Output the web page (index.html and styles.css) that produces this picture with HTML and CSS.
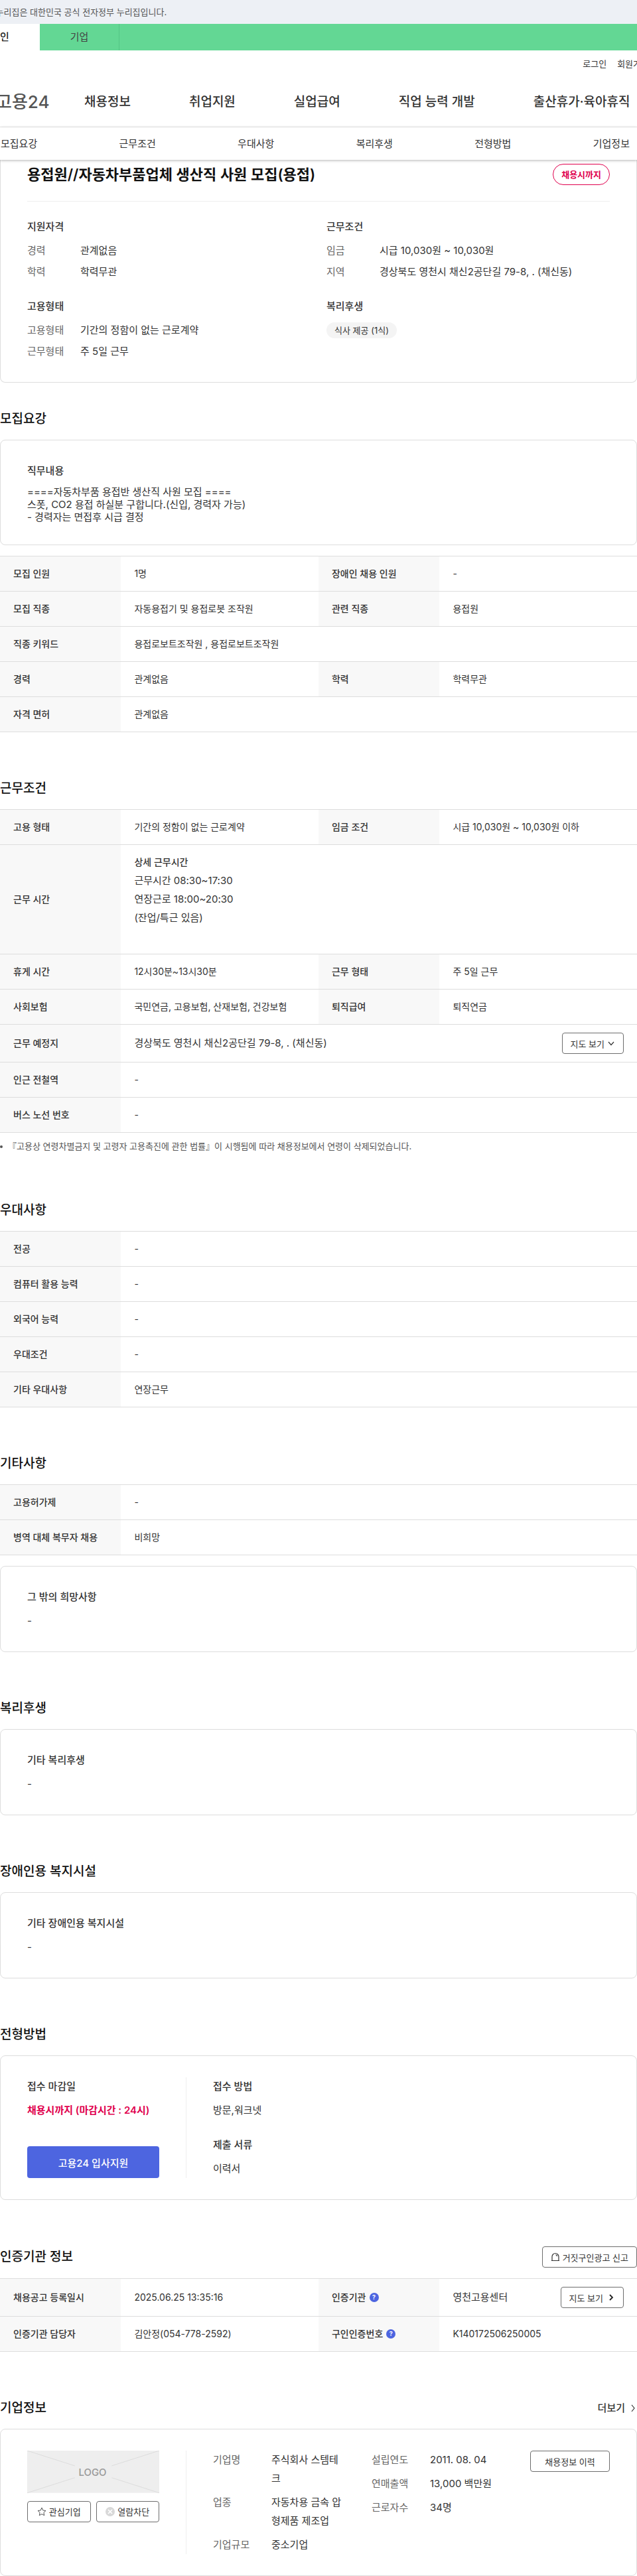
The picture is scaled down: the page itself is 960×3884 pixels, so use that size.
FILE: index.html
```html
<!DOCTYPE html>
<html lang="ko">
<head>
    <meta charset="UTF-8">
    <meta name="viewport" content="width=device-width, initial-scale=1.0">
    <title>채용정보 상세 - 고용24</title>
    <link rel="stylesheet" href="styles.css">
</head>
<body>
    <!-- 헤더 -->
    <header class="header">
        <div class="gov-bar">
            <p>이 누리집은 대한민국 공식 전자정부 누리집입니다.</p>
        </div>
        <nav class="site-tabs">
            <a href="#" class="active">개인</a>
            <a href="#">기업</a>
        </nav>
        <div class="util">
            <a href="#">로그인</a>
            <a href="#">회원가입</a>
        </div>
        <div class="gnb">
            <a href="#" class="logo">고용24</a>
            <nav class="gnb-menu">
                <a href="#">채용정보</a>
                <a href="#">취업지원</a>
                <a href="#">실업급여</a>
                <a href="#">직업 능력 개발</a>
                <a href="#">출산휴가·육아휴직</a>
            </nav>
        </div>
        <nav class="anchor-nav">
            <a href="#recruit">모집요강</a>
            <a href="#work">근무조건</a>
            <a href="#prefer">우대사항</a>
            <a href="#welfare">복리후생</a>
            <a href="#process">전형방법</a>
            <a href="#company">기업정보</a>
        </nav>
    </header>

    <main>
        <!-- 요약 -->
        <section class="box summary">
            <div class="summary-title">
                <h1>용접원//자동차부품업체 생산직 사원 모집(용접)</h1>
                <span class="badge">채용시까지</span>
            </div>
            <div class="summary-grid">
                <div>
                    <h3>지원자격</h3>
                    <dl class="info">
                        <dt>경력</dt><dd>관계없음</dd>
                        <dt>학력</dt><dd>학력무관</dd>
                    </dl>
                </div>
                <div>
                    <h3>근무조건</h3>
                    <dl class="info">
                        <dt>임금</dt><dd>시급 10,030원 ~ 10,030원</dd>
                        <dt>지역</dt><dd>경상북도 영천시 채신2공단길 79-8, . (채신동)</dd>
                    </dl>
                </div>
                <div>
                    <h3>고용형태</h3>
                    <dl class="info">
                        <dt>고용형태</dt><dd>기간의 정함이 없는 근로계약</dd>
                        <dt>근무형태</dt><dd>주 5일 근무</dd>
                    </dl>
                </div>
                <div>
                    <h3>복리후생</h3>
                    <span class="chip">식사 제공 (1식)</span>
                </div>
            </div>
        </section>

        <!-- 모집요강 -->
        <section class="section first" id="recruit">
            <div class="section-head"><h2>모집요강</h2></div>
            <div class="box">
                <h3>직무내용</h3>
                <p class="job-text">====자동차부품 용접반 생산직 사원 모집 ====<br>스폿, CO2 용접 하실분 구합니다.(신입, 경력자 가능)<br>- 경력자는 면접후 시급 결정</p>
            </div>
            <table class="table">
                <colgroup><col class="col-th"><col class="col-td"><col class="col-th"><col class="col-td"></colgroup>
                <tr><th scope="row">모집 인원</th><td>1명</td><th scope="row">장애인 채용 인원</th><td>-</td></tr>
                <tr><th scope="row">모집 직종</th><td>자동용접기 및 용접로봇 조작원</td><th scope="row">관련 직종</th><td>용접원</td></tr>
                <tr><th scope="row">직종 키워드</th><td colspan="3">용접로보트조작원 , 용접로보트조작원</td></tr>
                <tr><th scope="row">경력</th><td>관계없음</td><th scope="row">학력</th><td>학력무관</td></tr>
                <tr><th scope="row">자격 면허</th><td colspan="3">관계없음</td></tr>
            </table>
        </section>

        <!-- 근무조건 -->
        <section class="section" id="work">
            <div class="section-head"><h2>근무조건</h2></div>
            <table class="table">
                <colgroup><col class="col-th"><col class="col-td"><col class="col-th"><col class="col-td"></colgroup>
                <tr><th scope="row">고용 형태</th><td>기간의 정함이 없는 근로계약</td><th scope="row">임금 조건</th><td>시급 10,030원 ~ 10,030원 이하</td></tr>
                <tr>
                    <th scope="row">근무 시간</th>
                    <td colspan="3">
                        <strong>상세 근무시간</strong>
                        <p class="work-time">근무시간 08:30~17:30<br>연장근로 18:00~20:30<br>(잔업/특근 있음)</p>
                    </td>
                </tr>
                <tr><th scope="row">휴게 시간</th><td>12시30분~13시30분</td><th scope="row">근무 형태</th><td>주 5일 근무</td></tr>
                <tr><th scope="row">사회보험</th><td>국민연금, 고용보험, 산재보험, 건강보험</td><th scope="row">퇴직급여</th><td>퇴직연금</td></tr>
                <tr>
                    <th scope="row">근무 예정지</th>
                    <td colspan="3">
                        <div class="cell-between">
                            <span>경상북도 영천시 채신2공단길 79-8, . (채신동)</span>
                            <button type="button" class="btn">지도 보기
                                <svg width="12" height="12" viewBox="0 0 12 12"><path d="M2 4l4 4.500 4-4.500" fill="none" stroke="#333" stroke-width="1.200"/></svg>
                            </button>
                        </div>
                    </td>
                </tr>
                <tr><th scope="row">인근 전철역</th><td colspan="3">-</td></tr>
                <tr><th scope="row">버스 노선 번호</th><td colspan="3">-</td></tr>
            </table>
            <p class="note">『고용상 연령차별금지 및 고령자 고용촉진에 관한 법률』이 시행됨에 따라 채용정보에서 연령이 삭제되었습니다.</p>
        </section>

        <!-- 우대사항 -->
        <section class="section" id="prefer">
            <div class="section-head"><h2>우대사항</h2></div>
            <table class="table">
                <colgroup><col class="col-th"><col></colgroup>
                <tr><th scope="row">전공</th><td>-</td></tr>
                <tr><th scope="row">컴퓨터 활용 능력</th><td>-</td></tr>
                <tr><th scope="row">외국어 능력</th><td>-</td></tr>
                <tr><th scope="row">우대조건</th><td>-</td></tr>
                <tr><th scope="row">기타 우대사항</th><td>연장근무</td></tr>
            </table>
        </section>

        <!-- 기타사항 -->
        <section class="section">
            <div class="section-head"><h2>기타사항</h2></div>
            <table class="table">
                <colgroup><col class="col-th"><col></colgroup>
                <tr><th scope="row">고용허가제</th><td>-</td></tr>
                <tr><th scope="row">병역 대체 복무자 채용</th><td>비희망</td></tr>
            </table>
            <div class="box">
                <h3>그 밖의 희망사항</h3>
                <p>-</p>
            </div>
        </section>

        <!-- 복리후생 -->
        <section class="section" id="welfare">
            <div class="section-head"><h2>복리후생</h2></div>
            <div class="box">
                <h3>기타 복리후생</h3>
                <p>-</p>
            </div>
        </section>

        <section class="section">
            <div class="section-head"><h2>장애인용 복지시설</h2></div>
            <div class="box">
                <h3>기타 장애인용 복지시설</h3>
                <p>-</p>
            </div>
        </section>

        <!-- 전형방법 -->
        <section class="section" id="process">
            <div class="section-head"><h2>전형방법</h2></div>
            <div class="box split">
                <div class="split-left">
                    <div>
                        <h3>접수 마감일</h3>
                        <p class="deadline">채용시까지 (마감시간 : 24시)</p>
                    </div>
                    <button type="button" class="btn-primary">고용24 입사지원</button>
                </div>
                <div class="split-right methods">
                    <div>
                        <h3>접수 방법</h3>
                        <p>방문,워크넷</p>
                    </div>
                    <div>
                        <h3>제출 서류</h3>
                        <p>이력서</p>
                    </div>
                </div>
            </div>
        </section>

        <!-- 인증기관 정보 -->
        <section class="section">
            <div class="section-head">
                <h2>인증기관 정보</h2>
                <button type="button" class="btn">
                    <svg width="14" height="14" viewBox="0 0 14 14"><path d="M1 12.500h12M2 12V6.500a5 5 0 0 1 10 0V12M7.500 3.500a3 3 0 0 1 2 2.500" fill="none" stroke="#333" stroke-width="1.200"/></svg>
                    거짓구인광고 신고
                </button>
            </div>
            <table class="table">
                <colgroup><col class="col-th"><col class="col-td"><col class="col-th"><col class="col-td"></colgroup>
                <tr>
                    <th scope="row">채용공고 등록일시</th><td>2025.06.25 13:35:16</td>
                    <th scope="row"><div class="cell-help">인증기관 <button type="button" class="help">?</button></div></th>
                    <td>
                        <div class="cell-between">
                            <span>영천고용센터</span>
                            <button type="button" class="btn">지도 보기
                                <svg width="14" height="12" viewBox="0 0 14 12"><path d="M6 2l4 4-4 4" fill="none" stroke="#222" stroke-width="1.800"/></svg>
                            </button>
                        </div>
                    </td>
                </tr>
                <tr>
                    <th scope="row">인증기관 담당자</th><td>김안정(054-778-2592)</td>
                    <th scope="row"><div class="cell-help">구인인증번호 <button type="button" class="help">?</button></div></th>
                    <td>K140172506250005</td>
                </tr>
            </table>
        </section>

        <!-- 기업정보 -->
        <section class="section" id="company">
            <div class="section-head">
                <h2>기업정보</h2>
                <a href="#" class="more">더보기
                    <svg width="12" height="12" viewBox="0 0 12 12"><path d="M4 1l4 5-4 5" fill="none" stroke="#333" stroke-width="1.200"/></svg>
                </a>
            </div>
            <div class="box split">
                <div class="split-left">
                    <svg class="company-logo" viewBox="0 0 200 64" role="img">
                        <rect width="200" height="64" fill="#eee"/>
                        <path d="M0 0l72 23M200 0l-72 23M0 64l72-23M200 64l-72-23" stroke="#dcdcdc"/>
                        <text x="99" y="38" text-anchor="middle">LOGO</text>
                    </svg>
                    <div class="company-btns">
                        <button type="button" class="btn">
                            <svg width="14" height="14" viewBox="0 0 14 14"><path d="M7 1l1.800 4 4.200.5-3.100 2.900.8 4.300L7 10.600l-3.700 2.100.8-4.300L1 5.500 5.200 5z" fill="none" stroke="#555"/></svg>
                            관심기업
                        </button>
                        <button type="button" class="btn">
                            <svg width="14" height="14" viewBox="0 0 14 14"><circle cx="7" cy="7" r="7" fill="#d8d8d8"/><path d="M4 4l6 6M10 4l-6 6" stroke="#fff" stroke-width="1.600"/></svg>
                            열람차단
                        </button>
                    </div>
                </div>
                <div class="split-right company">
                    <dl class="info">
                        <dt>기업명</dt><dd>주식회사 스템테크</dd>
                        <dt>업종</dt><dd>자동차용 금속 압형제품 제조업</dd>
                        <dt>기업규모</dt><dd>중소기업</dd>
                    </dl>
                    <dl class="info">
                        <dt>설립연도</dt><dd>2011. 08. 04</dd>
                        <dt>연매출액</dt><dd>13,000 백만원</dd>
                        <dt>근로자수</dt><dd>34명</dd>
                    </dl>
                    <button type="button" class="btn history">채용정보 이력</button>
                </div>
            </div>
        </section>
    </main>
</body>
</html>
```

FILE: styles.css
```css
* {
    box-sizing: border-box;
}
body {
    margin: 0;
    overflow-x: hidden;
    font-family: Inter, "Noto Sans CJK KR", sans-serif;
    font-size: 15px;
    line-height: 28px;
    color: #333;
    background: #fff;
}
h1, h2, h3, p, dl, dd {
    margin: 0;
}
a {
    color: inherit;
    text-decoration: none;
}
button {
    font-family: inherit;
    cursor: pointer;
}

/* header */
.header {
    position: relative;
    overflow: hidden;
    padding-bottom: 6px;
    margin-bottom: -6px;
    white-space: nowrap;
}
.gov-bar {
    height: 36px;
    margin-left: -60px;
    padding-left: 38px;
    background: #edf0f5;
    font-size: 13px;
    line-height: 36px;
    color: #555;
}
.site-tabs {
    display: flex;
    height: 40px;
    margin-left: -60px;
    background: #63d794;
}
.site-tabs a {
    width: 120px;
    border-right: 1px solid #55c585;
    line-height: 40px;
    text-align: center;
    color: #444;
}
.site-tabs .active {
    border-right: 0;
    background: #fff;
    font-weight: 500;
    color: #222;
}
.util {
    display: flex;
    justify-content: flex-end;
    gap: 16px;
    height: 40px;
    margin-right: -18px;
    font-size: 13px;
    line-height: 40px;
}
.gnb {
    display: flex;
    align-items: center;
    height: 76px;
    margin-left: -6px;
    border-bottom: 1px solid #eee;
}
.logo {
    width: 133px;
    font-size: 26px;
    font-weight: 500;
    color: #555;
}
.gnb-menu {
    display: flex;
    gap: 88px;
    font-size: 19px;
    font-weight: 500;
}
.anchor-nav {
    display: flex;
    justify-content: space-between;
    padding: 0 11px 0 1px;
    line-height: 49px;
    box-shadow: 0 1px 4px rgba(0,0,0,0.3);
}

/* box */
.box {
    padding: 32px 40px;
    border: 1px solid #ddd;
    border-radius: 8px;
}
.box h3 {
    margin-bottom: 8px;
    font-size: 15px;
    font-weight: 500;
}
.summary {
    padding-top: 6px;
    border-top: 0;
    border-radius: 0 0 8px 8px;
}
.summary-title {
    display: flex;
    justify-content: space-between;
    align-items: center;
    padding-bottom: 24px;
    margin-bottom: 24px;
    border-bottom: 1px solid #eee;
}
.summary-title h1 {
    font-size: 22px;
    font-weight: 600;
    color: #111;
}
.badge {
    padding: 0 12px;
    border: 1px solid #e0004d;
    border-radius: 16px;
    font-size: 13px;
    font-weight: 600;
    line-height: 30px;
    color: #e0004d;
}
.summary-grid {
    display: grid;
    grid-template-columns: 1fr 1fr;
    gap: 24px;
}
.info {
    display: grid;
    grid-template-columns: 80px 1fr;
    row-gap: 4px;
    align-content: start;
}
.info dt {
    color: #666;
}
.chip {
    display: inline-block;
    padding: 0 12px;
    border-radius: 12px;
    background: #f4f4f4;
    font-size: 13px;
    line-height: 24px;
}
.job-text {
    line-height: 19px;
}

/* section */
.section {
    margin-top: 70px;
}
.section.first {
    margin-top: 40px;
}
.section-head {
    display: flex;
    justify-content: space-between;
    align-items: center;
    margin-bottom: 16px;
}
.section-head h2 {
    font-size: 19px;
    font-weight: 500;
    line-height: 30px;
    color: #111;
}
.box + .table,
.table + .box {
    margin-top: 16px;
}

/* table */
.table {
    width: 100%;
    table-layout: fixed;
    border-collapse: collapse;
    font-size: 14px;
}
.col-th {
    width: 19%;
}
.col-td {
    width: 31%;
}
.table th,
.table td {
    padding: 12px 20px;
    border-top: 1px solid #ddd;
    border-bottom: 1px solid #ddd;
    text-align: left;
}
.table th {
    background: #f8f8f8;
    font-weight: 500;
}
.table strong {
    font-weight: 500;
}
.work-time {
    padding-bottom: 28px;
    font-size: 15px;
}
.cell-between {
    display: flex;
    justify-content: space-between;
    align-items: center;
    font-size: 15px;
}
.cell-help {
    display: flex;
    align-items: center;
    gap: 5px;
}
.help {
    width: 14px;
    height: 14px;
    padding: 0;
    border: 0;
    border-radius: 50%;
    background: #4d65e0;
    font-size: 9px;
    font-weight: 700;
    line-height: 14px;
    color: #fff;
}
.note {
    position: relative;
    padding-left: 12px;
    margin-top: 8px;
    font-size: 13px;
    line-height: 24px;
    color: #555;
}
.note::before {
    content: "";
    position: absolute;
    left: 0;
    top: 11px;
    width: 4px;
    height: 4px;
    border-radius: 50%;
    background: #555;
}

/* buttons */
.btn {
    display: flex;
    justify-content: center;
    align-items: center;
    gap: 4px;
    height: 32px;
    padding: 0 12px;
    border: 1px solid #6d6d6d;
    border-radius: 4px;
    background: #fff;
    font-size: 13px;
    color: #333;
    white-space: nowrap;
}
.btn-primary {
    height: 48px;
    border: 0;
    border-radius: 4px;
    background: #4d65e0;
    font-size: 15px;
    font-weight: 500;
    color: #fff;
}
.more {
    display: flex;
    align-items: center;
    gap: 6px;
    font-weight: 500;
}

/* split box */
.split {
    display: flex;
}
.split-left {
    display: flex;
    flex-direction: column;
    justify-content: space-between;
    flex: 0 0 239px;
    padding-right: 40px;
}
.split-right {
    flex: 1;
    padding-left: 40px;
    border-left: 1px solid #eee;
}
.methods {
    display: grid;
    gap: 24px;
}
.deadline {
    font-weight: 600;
    color: #e0004d;
    white-space: nowrap;
}
.company {
    display: grid;
    grid-template-columns: 1fr 1fr 120px;
    gap: 24px;
}
.company .info {
    grid-template-columns: 88px 1fr;
    row-gap: 8px;
}
.company dd {
    padding-right: 16px;
    word-break: break-all;
}
#company .split-left {
    justify-content: flex-start;
    gap: 12px;
}
.company-logo {
    display: block;
    width: 100%;
}
.company-logo text {
    font-size: 15px;
    font-weight: 500;
    fill: #999;
}
.company-btns {
    display: flex;
    gap: 8px;
}
.company-btns .btn {
    flex: 1;
    padding: 0;
}
.history {
    padding: 0;
}
```
